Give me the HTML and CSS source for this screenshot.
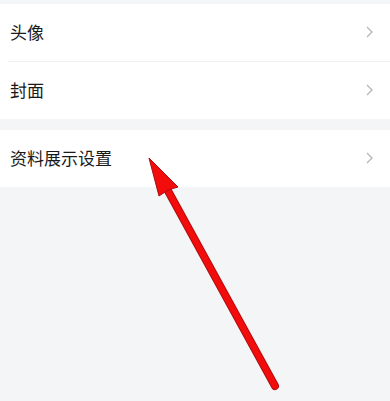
FILE: index.html
```html
<!DOCTYPE html>
<html lang="zh">
<head>
<meta charset="utf-8">
<link rel="stylesheet" href="styles.css">
</head>
<body>
<div class="page">
  <div class="group">
    <div class="row divided"><span class="label">头像</span><svg class="chev" width="7" height="12" viewBox="0 0 7 12"><polyline points="1,1 6,6 1,11" /></svg></div>
    <div class="row"><span class="label">封面</span><svg class="chev" width="7" height="12" viewBox="0 0 7 12"><polyline points="1,1 6,6 1,11" /></svg></div>
  </div>
  <div class="group">
    <div class="row"><span class="label">资料展示设置</span><svg class="chev" width="7" height="12" viewBox="0 0 7 12"><polyline points="1,1 6,6 1,11" /></svg></div>
  </div>
  <svg class="arrow" width="390" height="401" viewBox="0 0 390 401">
    <line x1="275" y1="386" x2="167" y2="189" stroke="#b00c0c" stroke-width="8" stroke-linecap="round"/>
    <line x1="275" y1="386" x2="167" y2="189" stroke="#f20c0c" stroke-width="6" stroke-linecap="round"/>
    <polygon points="149,158 178,187 168,190 159,196" fill="#f20c0c" stroke="#b00c0c" stroke-width="1" stroke-linejoin="round"/>
  </svg>
</div>
</body>
</html>
```
FILE: styles.css
```css
html, body {
  margin: 0;
  padding: 0;
  background: #f4f5f7;
}
.page {
  position: relative;
  width: 390px;
  height: 401px;
  padding-top: 4px;
  box-sizing: border-box;
  display: flex;
  flex-direction: column;
  gap: 11px;
  font-family: "Noto Sans CJK SC", "Noto Sans", sans-serif;
  overflow: hidden;
}
.group {
  background: #ffffff;
  display: flex;
  flex-direction: column;
}
.row {
  height: 57px;
  box-sizing: border-box;
  display: flex;
  align-items: center;
  justify-content: space-between;
  padding: 0 17px 2px 10px;
  position: relative;
}
.row.divided::after {
  content: "";
  position: absolute;
  left: 8px;
  right: 0;
  bottom: -1px;
  height: 1px;
  background: #eeeff1;
}
.divided {
  margin-bottom: 1px;
}
.label {
  font-size: 17px;
  color: #1a1a1a;
  line-height: 1;
}
.chev polyline {
  fill: none;
  stroke: #b5b5b8;
  stroke-width: 1.3;
}
.arrow {
  position: absolute;
  left: 0;
  top: 0;
  pointer-events: none;
}
```
